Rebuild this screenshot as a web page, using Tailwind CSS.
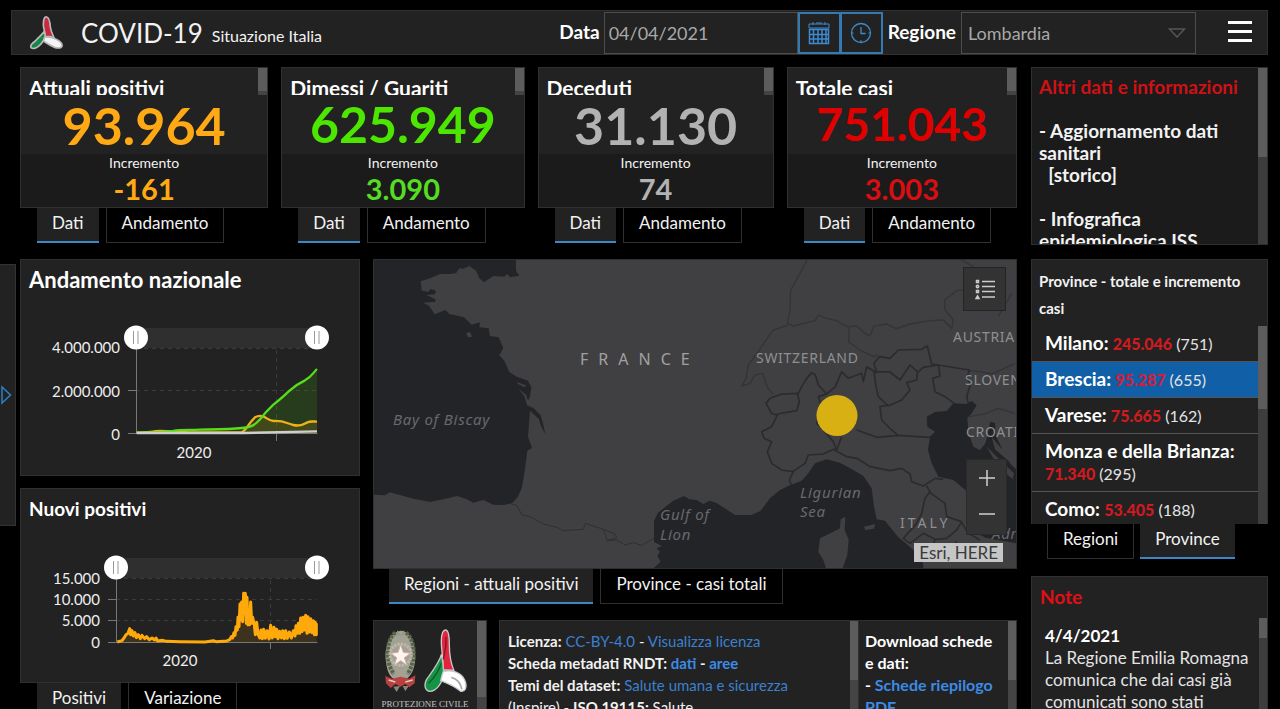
<!DOCTYPE html>
<html lang="it">
<head>
    <meta charset="UTF-8">
    <meta name="viewport" content="width=device-width, initial-scale=1.0">
    <title>COVID-19 Situazione Italia</title>
    <script src="https://cdn.jsdelivr.net/npm/@tailwindcss/browser@4"></script>
</head>
<body class="h-screen overflow-hidden bg-black text-[#f2f2f2] font-['Lato','Open_Sans',sans-serif]">

    <!-- Header -->
    <header class="mt-[10px] ml-[11px] mr-3 h-[45px] flex items-center bg-[#222] border border-[#303030]">
        <svg class="ml-4 w-9 h-9 shrink-0" viewBox="0 0 108 108" aria-hidden="true">
            <g stroke="#b9b9b9" stroke-width="5" stroke-linejoin="round">
                <path d="M48 50C42 60 32 66 22 78C10 86 6 92 9 98C16 104 30 98 38 88C46 80 50 72 54 62Z" fill="#17864a"/>
                <path d="M50 66C66 64 92 72 101 86C106 98 96 101 82 98C68 92 58 86 46 78Z" fill="#f4f4f4"/>
                <path d="M46 30C46 10 50 5 56 6C64 8 66 20 67 36C69 50 74 58 78 68C68 64 60 64 52 64C52 50 46 42 46 30Z" fill="#c9283e"/>
            </g>
        </svg>
        <h1 class="ml-[17px] text-[26px] leading-8">COVID-19</h1>
        <p class="ml-[9px] mt-[6px] text-base leading-6">Situazione Italia</p>

        <div class="ml-auto flex items-center">
            <label for="data" class="mr-1 text-[19px] font-bold text-white">Data</label>
            <input id="data" type="text" value="04/04/2021" class="w-[194px] h-[42px] px-1 text-lg text-[#a8a8a8] bg-[#222] border border-[#4c4c4c]">
            <button type="button" aria-label="Calendario" class="w-[43px] h-[42px] flex items-center justify-center border-2 border-[#3579b3]">
                <svg class="w-6 h-6" viewBox="0 0 24 24" fill="none" stroke="#3c8bd0">
                    <path d="M2 7V3H22V7H2M6 1V4M18 1V4M9 2H15"/>
                    <path d="M2 8.5H22M2 13.5H22M2 18H22M2 22.5H22M2.500 8V23M6.500 8V23M11 8V23M15 8V23M19 8V23M21.500 8V23" stroke-width="1.500"/>
                </svg>
            </button>
            <button type="button" aria-label="Ora" class="-ml-px w-[43px] h-[42px] flex items-center justify-center border-2 border-[#3579b3]">
                <svg class="w-6 h-6" viewBox="0 0 24 24" fill="none" stroke="#3c8bd0" stroke-width="1.300">
                    <circle cx="12" cy="12" r="9.500"/>
                    <path d="M12 6V12.500H16.500"/>
                    <path d="M12 19V21.500M3 12H4.500M19.500 12H21" stroke-width="1"/>
                </svg>
            </button>
            <label for="regione" class="ml-[5px] mr-[5px] text-[19px] font-bold text-white">Regione</label>
            <div class="relative">
                <select id="regione" class="appearance-none w-[235px] h-[42px] px-[6px] text-lg text-[#a8a8a8] bg-[#222] border border-[#4c4c4c]">
                    <option>Lombardia</option>
                </select>
                <svg class="absolute right-[10px] top-[16px] w-[18px] h-[10px] pointer-events-none" viewBox="0 0 18 10" fill="none" stroke="#555" stroke-width="1.500"><path d="M1.500 1H16.500L9 9Z"/></svg>
            </div>
            <button type="button" aria-label="Menu" class="ml-8 mr-[15px] pb-[3px] flex flex-col gap-[6px]">
                <span class="w-6 h-[3px] bg-white"></span>
                <span class="w-6 h-[3px] bg-white"></span>
                <span class="w-6 h-[3px] bg-white"></span>
            </button>
        </div>
    </header>

    <div class="flex items-start mt-3">
        <!-- Left drawer handle -->
        <aside class="w-4 h-[262px] mt-[197px] shrink-0 flex items-center bg-[#222] border-y border-r border-[#333]">
            <button type="button" aria-label="Apri pannello">
                <svg class="w-3 h-5" viewBox="0 0 12 20" fill="none" stroke="#2f7fc4" stroke-width="1.500"><path d="M2 2V18L10.500 10Z"/></svg>
            </button>
        </aside>

        <main class="flex-1 min-w-0 ml-1 mr-3 grid grid-cols-[minmax(0,1fr)_237px] gap-[14px] items-start">
            <div>
                <!-- Indicators -->
                <div class="grid grid-cols-[248fr_243fr_236fr_230fr] gap-x-[13px]">
                    <section>
                        <div class="h-[141px] bg-[#222] border border-[#303030]">
                            <div class="flex h-[27px] overflow-hidden">
                                <h2 class="flex-1 pl-2 pt-2 text-[21px] leading-6 font-bold text-white">Attuali positivi</h2>
                                <div class="w-[9px] h-[27px] bg-[#5c5c5c] border-b-4 border-[#444]"></div>
                            </div>
                            <p class="h-[59px] text-center text-[52px] leading-[60px] font-bold text-[#ffaa15]">93.964</p>
                            <div class="h-[53px] bg-[#1b1b1b] text-center">
                                <p class="text-sm leading-[18px]">Incremento</p>
                                <p class="text-[29px] leading-[34px] font-bold text-[#ffaa15]">-161</p>
                            </div>
                        </div>
                        <div class="ml-[17px] flex gap-[7px]">
                            <button type="button" class="h-[35px] px-[15px] pb-1 text-[17px] bg-[#222] border-b-2 border-[#3d87c9]">Dati</button>
                            <button type="button" class="h-[35px] px-[15px] pb-1 text-[17px] border border-t-0 border-[#303030]">Andamento</button>
                        </div>
                    </section>

                    <section>
                        <div class="h-[141px] bg-[#222] border border-[#303030]">
                            <div class="flex h-[27px] overflow-hidden">
                                <h2 class="flex-1 pl-2 pt-2 text-[21px] leading-6 font-bold text-white">Dimessi / Guariti</h2>
                                <div class="w-[9px] h-[27px] bg-[#5c5c5c] border-b-4 border-[#444]"></div>
                            </div>
                            <p class="h-[59px] text-center text-[50px] leading-[58px] font-bold text-[#4ce600]">625.949</p>
                            <div class="h-[53px] bg-[#1b1b1b] text-center">
                                <p class="text-sm leading-[18px]">Incremento</p>
                                <p class="text-[29px] leading-[34px] font-bold text-[#55dd22]">3.090</p>
                            </div>
                        </div>
                        <div class="ml-[17px] flex gap-[7px]">
                            <button type="button" class="h-[35px] px-[15px] pb-1 text-[17px] bg-[#222] border-b-2 border-[#3d87c9]">Dati</button>
                            <button type="button" class="h-[35px] px-[15px] pb-1 text-[17px] border border-t-0 border-[#303030]">Andamento</button>
                        </div>
                    </section>

                    <section>
                        <div class="h-[141px] bg-[#222] border border-[#303030]">
                            <div class="flex h-[27px] overflow-hidden">
                                <h2 class="flex-1 pl-2 pt-2 text-[21px] leading-6 font-bold text-white">Deceduti</h2>
                                <div class="w-[9px] h-[27px] bg-[#5c5c5c] border-b-4 border-[#444]"></div>
                            </div>
                            <p class="h-[59px] text-center text-[52px] leading-[60px] font-bold text-[#b2b2b2]">31.130</p>
                            <div class="h-[53px] bg-[#1b1b1b] text-center">
                                <p class="text-sm leading-[18px]">Incremento</p>
                                <p class="text-[29px] leading-[34px] font-bold text-[#b2b2b2]">74</p>
                            </div>
                        </div>
                        <div class="ml-[17px] flex gap-[7px]">
                            <button type="button" class="h-[35px] px-[15px] pb-1 text-[17px] bg-[#222] border-b-2 border-[#3d87c9]">Dati</button>
                            <button type="button" class="h-[35px] px-[15px] pb-1 text-[17px] border border-t-0 border-[#303030]">Andamento</button>
                        </div>
                    </section>

                    <section>
                        <div class="h-[141px] bg-[#222] border border-[#303030]">
                            <div class="flex h-[27px] overflow-hidden">
                                <h2 class="flex-1 pl-2 pt-2 text-[21px] leading-6 font-bold text-white">Totale casi</h2>
                                <div class="w-[9px] h-[27px] bg-[#5c5c5c] border-b-4 border-[#444]"></div>
                            </div>
                            <p class="h-[59px] text-center text-[46px] leading-[58px] font-bold text-[#e00000]">751.043</p>
                            <div class="h-[53px] bg-[#1b1b1b] text-center">
                                <p class="text-sm leading-[18px]">Incremento</p>
                                <p class="text-[29px] leading-[34px] font-bold text-[#d80e12]">3.003</p>
                            </div>
                        </div>
                        <div class="ml-[17px] flex gap-[7px]">
                            <button type="button" class="h-[35px] px-[15px] pb-1 text-[17px] bg-[#222] border-b-2 border-[#3d87c9]">Dati</button>
                            <button type="button" class="h-[35px] px-[15px] pb-1 text-[17px] border border-t-0 border-[#303030]">Andamento</button>
                        </div>
                    </section>
                </div>

                <div class="mt-4 grid grid-cols-[340fr_644fr] gap-x-[13px] items-start">
                    <!-- Charts -->
                    <div>
                        <section class="bg-[#222] border border-[#303030]">
                            <h2 class="h-[50px] pl-2 pt-2 text-[22px] leading-6 font-bold text-white">Andamento nazionale</h2>
                            <svg class="w-full block" viewBox="21 310 338 165" role="img" aria-label="Andamento nazionale">
                                <rect x="136" y="328" width="181" height="20" fill="#2f2f2f"/>
                                <g stroke="#3a3a3a" stroke-dasharray="4 4">
                                    <path d="M136 348.500H317M136 390.500H317M276.500 350V434"/>
                                </g>
                                <path d="M136.500 337V433.500M128 433.500H317.500M128 390.500H136M276.500 433V441" fill="none" stroke="#777"/>
                                <g transform="translate(0 250) scale(.33333)" fill="none" stroke-width="7" stroke-linejoin="round">
                                    <path d="M410 548L510 545L570 541L730 535L755 530L770 520L790 495L815 470L840 448L870 420L895 402L925 384L951 357V550H410Z" fill="#4ce600" fill-opacity=".13"/>
                                    <path d="M410 548L480 543L560 547L725 546L745 528L765 502L785 498L815 513L840 514L870 522L895 527L935 514L951 515V550H410Z" fill="#ffaa00" fill-opacity=".12"/>
                                    <path d="M410 548C440 548 450 545 480 543C510 543 540 547 570 547H725C740 540 745 520 765 502C775 496 785 496 795 502C805 508 812 514 822 513C850 511 860 520 880 525C895 529 905 527 920 518C932 512 940 515 951 515" stroke="#eeb11c"/>
                                    <path d="M410 548C450 548 500 546 520 543C545 538 570 541 600 539C650 538 690 538 725 534C760 532 768 520 780 508C795 488 805 478 818 466C835 452 850 440 866 424C885 406 900 398 915 391C935 380 940 368 951 357" stroke="#57dd1c"/>
                                    <path d="M410 549H730C800 548 870 546 951 544" stroke="#cfcfcf"/>
                                </g>
                                <g fill="#fff"><circle cx="136" cy="337.500" r="12"/><circle cx="317" cy="337.500" r="12"/></g>
                                <path d="M133.500 331V344M138 331V344M314.500 331V344M319 331V344" stroke="#999"/>
                                <g class="text-[15px]" fill="#eee" text-anchor="end">
                                    <text x="120" y="353">4.000.000</text>
                                    <text x="120" y="397">2.000.000</text>
                                    <text x="120" y="440">0</text>
                                    <text x="194" y="458" text-anchor="middle">2020</text>
                                </g>
                            </svg>
                        </section>

                        <section class="mt-3 bg-[#222] border border-[#303030]">
                            <h2 class="h-[51px] pl-2 pt-2 text-[19px] leading-6 font-bold text-white">Nuovi positivi</h2>
                            <svg class="w-full block" viewBox="21 540 338 142" role="img" aria-label="Nuovi positivi">
                                <rect x="116" y="558" width="201" height="20" fill="#2f2f2f"/>
                                <g stroke="#3a3a3a" stroke-dasharray="4 4">
                                    <path d="M116 578.500H317M116 599.500H317M116 620.500H317M270.500 580V642"/>
                                </g>
                                <path d="M116.500 567V642.500M108 642.500H317.500M108 599.500H116M108 620.500H116M270.500 642V649" fill="none" stroke="#777"/>
                                <g transform="translate(0 480) scale(.33333)" stroke="#ffaa0a" stroke-width="9" stroke-linejoin="round">
                                    <path d="M352 486L372 474L389 452L430 470L470 482L540 485L680 483L700 470L714 440L731 400L744 420L758 440L780 470L870 470L900 450L950 460V487H352Z" fill="#ffaa00" fill-opacity=".12" stroke="none"/>
                                    <path d="M352 486L366 482L372 474L378 464L384 460L389 446L392 464L396 452L400 468L405 458L409 473L415 464L421 476L426 466L434 476L440 470L448 479L456 474L464 480L468 474L473 483L488 481L500 484L540 485L615 486L640 482L648 485L680 483L690 478L694 470L698 474L702 458L705 466L708 440L712 450L714 412L717 440L720 372L723 420L725 366L728 425L731 340L734 400L736 340L739 430L741 352L744 435L747 392L749 434L752 366L755 430L758 412L763 435L766 464L770 427L774 462L779 474L783 450L787 476L791 448L796 475L801 452L807 477L812 436L817 474L822 442L826 470L830 448L834 476L839 454L844 474L848 452L853 476L857 452L862 475L868 456L874 474L880 452L885 468L888 437L892 460L895 430L899 460L902 414L906 455L909 412L913 450L917 406L921 460L924 410L928 456L932 416L936 458L940 422L943 464L946 427L949 464V430" fill="none"/>
                                </g>
                                <g fill="#fff"><circle cx="116" cy="567.500" r="12"/><circle cx="317" cy="567.500" r="12"/></g>
                                <path d="M113.500 561V574M118 561V574M314.500 561V574M319 561V574" stroke="#999"/>
                                <g class="text-[15px]" fill="#eee" text-anchor="end">
                                    <text x="100" y="584">15.000</text>
                                    <text x="100" y="605">10.000</text>
                                    <text x="100" y="626">5.000</text>
                                    <text x="100" y="648">0</text>
                                    <text x="180" y="666" text-anchor="middle">2020</text>
                                </g>
                            </svg>
                        </section>
                        <div class="ml-[17px] flex gap-[7px]">
                            <button type="button" class="h-[35px] px-[15px] pb-1 text-[17px] bg-[#222] border-b-2 border-[#3d87c9]">Positivi</button>
                            <button type="button" class="h-[35px] px-[15px] pb-1 text-[17px] border border-t-0 border-[#303030]">Variazione</button>
                        </div>
                    </div>

                    <div>
                        <!-- Map -->
                        <section class="relative border border-[#303030]">
                            <svg class="w-full block" viewBox="374 260 642 308" role="img" aria-label="Mappa">
                                <rect x="374" y="260" width="642" height="308" fill="#404042"/>
                                <!-- west coast, Pyrenees -->
                                <g transform="translate(370 250) scale(.33333)" fill="#232427">
                                    <path d="M10 28H438V62L448 77L420 82L412 72L402 80L370 78L342 97L328 85L318 62L298 48L280 56L268 55L258 70L238 72L210 72L180 85L152 94L155 122L175 125L182 117L198 122L195 133L170 135L196 148V155L160 158L178 168L194 193L226 180L238 192L282 202L305 224L330 217L328 232L356 235L360 258L386 262L400 294L388 316L404 334L418 366L440 380L474 392L484 412L480 440L474 452L468 434L446 416L464 440L471 466L490 474L512 496L520 524L526 552L514 530L506 506L480 482L474 560L486 594L472 602L466 650L456 712L444 740L426 760L400 765L370 764L340 750L310 758L290 748L262 738L220 748L180 756L130 746L60 727L44 736L10 734Z"/>
                                    <path d="M288 250L300 246L306 260L294 262Z" fill="#404042"/>
                                    <path d="M440 396L468 406L464 412L444 402Z" fill="#404042"/>
                                    <path d="M418 760L440 766L456 795L480 800L520 822L560 832L580 842L640 838L646 820L700 838L735 852L740 864L710 872L740 870L765 885L790 878L815 886L850 866L862 878M700 838L712 872" fill="none" stroke="#2f2f33" stroke-width="3"/>
                                </g>
                                <!-- Italy, seas and region borders -->
                                <g transform="translate(690 250) scale(.33333)">
                                    <g fill="#232427">
                                        <path d="M-110 955L-88 935L-98 918L-90 905L-100 895L-84 888L-108 876V812L-96 788L-50 752L-18 738L-2 748L20 750L40 762L58 752L78 758L100 772L135 795H185L212 782L240 745L270 720L300 706L335 692L355 670L375 640L410 628L450 638L490 660L520 678L545 715L552 770L560 808L585 812L625 862L650 882L690 918L705 955Z"/>
                                        <path d="M829 722L790 690L745 680L725 640L714 600L720 560L735 545L712 530L710 500L735 486L770 483L790 460L830 462L845 452L860 466L845 490L832 505L835 545L850 590L870 600L885 582L892 560L900 516L915 518L918 560L960 640L980 660V880L870 860L830 800Z"/>
                                    </g>
                                    <g fill="#404042">
                                        <path d="M452 808L466 800L464 840L476 870L472 915L458 955H408L400 930L385 905L390 865L430 845L450 835Z"/>
                                        <path d="M522 830L555 822L552 836L526 840Z"/>
                                        <path d="M905 560L925 585L975 635L970 645L915 598ZM890 590L940 640L972 670L968 688L925 650Z"/>
                                        <path d="M878 858L900 876L980 915V955H700V870L790 830Z"/>
                                    </g>
                                    <g fill="none" stroke="#343437" stroke-width="4">
                                        <path d="M352 28L330 70L302 120L300 180L292 220L310 228L375 212L385 195L410 205L440 212L470 230L500 228L525 250L540 258L552 228L590 222L620 236L660 222L720 212L760 210L785 235L790 210L765 180L764 150L800 122L835 118"/>
                                        <path d="M292 226L250 240L235 260L205 305L175 345L168 385L155 408L180 400L195 375L218 370L232 412L250 432"/>
                                        <path d="M478 232L476 275L510 300L550 320L565 315"/>
                                        <path d="M838 362L870 365L905 372L975 340M838 500L890 490L925 475L975 490M812 28L850 50M925 200L965 130"/>
                                    </g>
                                    <g fill="none" stroke="#2b2b2e" stroke-width="5" stroke-linejoin="round">
                                        <path d="M410 432L385 405L376 375L365 368L350 385L335 410L325 430L275 432L240 445L228 460L245 490L262 495L245 530L215 545L222 565L245 575L232 605L245 640L275 660L310 665L298 690L305 706"/>
                                        <path d="M262 492L320 482L328 455L322 430M410 432L436 410L455 365L475 385L515 370L520 395L530 350L560 368L552 340L568 320L600 325L625 300L695 298L712 288L725 342L838 360L830 385L842 400L830 440L835 460"/>
                                        <path d="M552 365L558 410L565 440L595 468L635 450L660 420L650 398L680 390L682 368L700 352L745 345L750 378L728 385L735 425L765 440L795 462"/>
                                        <path d="M560 365L600 366L630 390L660 345L682 365M595 465L570 470L575 510L605 540L625 556M410 432L385 440L395 470L380 520L400 540L430 575L440 600L455 560M500 540L560 562L625 556L720 562"/>
                                        <path d="M308 665L345 640L355 615L400 612L430 598L470 620L500 625L540 650L600 662L635 655L660 672L665 695L700 708L735 685L760 688"/>
                                        <path d="M710 708L720 725L705 745L695 790L680 820L640 865L660 880L700 850L735 868L770 865L800 840L815 815L770 800L765 760L720 728"/>
                                        <path d="M735 868L725 900L760 920L800 875M815 818L835 850L870 870"/>
                                    </g>
                                </g>
                                <g class="font-['Noto_Sans','Open_Sans',sans-serif] text-[14px]" fill="#8f8f91">
                                    <text x="580" y="365" class="text-[16px] tracking-[10px]" fill="#a0a0a2">FRANCE</text>
                                    <text x="756" y="363" class="tracking-wider">SWITZERLAND</text>
                                    <text x="953" y="342" class="tracking-wider">AUSTRIA</text>
                                    <text x="965" y="385" class="tracking-wider">SLOVENIA</text>
                                    <text x="966" y="437" class="tracking-wider">CROATIA</text>
                                    <text x="900" y="528" class="tracking-[3px]">ITALY</text>
                                    <g fill="#68696d" class="text-[15px] italic tracking-wider">
                                        <text x="393" y="425">Bay of Biscay</text>
                                        <text x="660" y="520">Gulf of</text>
                                        <text x="660" y="540">Lion</text>
                                        <text x="800" y="498">Ligurian</text>
                                        <text x="800" y="517">Sea</text>
                                        <text x="992" y="539">Adriatic</text>
                                    </g>
                                </g>
                                <circle cx="837" cy="415.500" r="20.500" fill="#d9b014"/>
                            </svg>
                            <button type="button" aria-label="Legenda" class="absolute top-[7px] right-[10px] w-[43px] h-11 flex items-center justify-center bg-[#333] border border-[#242424]">
                                <svg class="w-5 h-[22px]" viewBox="0 0 20 22" fill="none" stroke="#ccc">
                                    <path d="M7 3.500H20M7 8.500H20M7 13.500H20M7 19H20" stroke-width="1.300"/>
                                    <path d="M1.500 2.500H3.500V4.500H1.500ZM1.500 12.500H3.500V14.500H1.500ZM2.500 18L4 20.500H1Z" stroke-width="1.500"/><circle cx="2.500" cy="8.500" r="1.200" stroke-width="1.500"/>
                                </svg>
                            </button>
                            <div class="absolute bottom-[33px] right-[9px] w-[41px] h-[76px] pb-[2px] flex flex-col bg-[#333] border border-[#2a2a2a]">
                                <button type="button" aria-label="Ingrandisci" class="flex-1 flex items-center justify-center">
                                    <svg class="w-[18px] h-[18px]" viewBox="0 0 18 18" stroke="#d0d0d0" stroke-width="1.500"><path d="M9 1V17M1 9H17"/></svg>
                                </button>
                                <button type="button" aria-label="Riduci" class="flex-1 flex items-center justify-center">
                                    <svg class="w-[18px] h-[18px]" viewBox="0 0 18 18" stroke="#d0d0d0" stroke-width="1.500"><path d="M1 9H17"/></svg>
                                </button>
                            </div>
                            <p class="absolute bottom-[6px] right-[13px] px-[5px] text-[17px] leading-[19px] bg-[#c6c6c6] text-[#3a3a3a]">Esri, HERE</p>
                        </section>
                        <div class="ml-4 flex gap-[7px]">
                            <button type="button" class="h-[35px] px-[15px] pb-1 text-[17px] bg-[#222] border-b-2 border-[#3d87c9]">Regioni - attuali positivi</button>
                            <button type="button" class="h-[35px] px-[15px] pb-1 text-[17px] border border-t-0 border-[#303030]">Province - casi totali</button>
                        </div>

                        <!-- Credits and downloads -->
                        <div class="mt-4 flex h-[140px]">
                            <section class="w-[114px] mr-3 shrink-0 flex bg-[#222] border border-[#303030]">
                                <svg class="flex-1 min-w-0 h-[100px]" viewBox="374 621 103 100" role="img" aria-label="Protezione Civile">
                                    <g transform="translate(372 618) scale(.33333)">
                                        <path d="M86 38C52 42 36 90 42 130C46 168 56 184 84 190C112 186 128 160 130 120C130 80 118 40 86 38Z" fill="#a3a094"/>
                                        <path d="M70 44C50 60 42 96 50 130C52 146 60 160 66 168M102 44C122 60 130 96 122 130C118 150 112 160 106 168" fill="none" stroke="#56664b" stroke-width="12" stroke-dasharray="9 3"/>
                                        <path d="M76 36L86 56L94 36L98 50L72 52Z" fill="#8c9a80"/>
                                        <circle cx="86" cy="110" r="32" fill="none" stroke="#bdb8ad" stroke-width="9" stroke-dasharray="7 3"/>
                                        <path d="M86 80L94 103L116 106L97 119L105 142L86 128L67 142L74 119L56 106L78 103Z" fill="#fff4ee" stroke="#cbb0a4" stroke-width="3"/>
                                        <path d="M40 174L60 182L86 176L112 182L130 172L128 196L112 208L100 198L86 206L70 198L56 210L42 196Z" fill="#b8403f"/>
                                        <path d="M64 206L74 222L84 204M92 204L100 220L110 204" fill="#8c8577"/>
                                        <path d="M50 186L70 192M100 192L122 186" stroke="#e2c9c4" stroke-width="4"/>
                                        <g stroke="#c9c9c9" stroke-width="4" stroke-linejoin="round">
                                            <path d="M208 110C204 128 190 148 170 176C154 194 156 216 172 220C196 220 212 192 218 160Z" fill="#159447"/>
                                            <path d="M214 160C240 154 268 164 278 186C288 210 278 222 266 220C244 202 226 196 206 188C208 180 210 170 214 160Z" fill="#fff"/>
                                            <path d="M208 70C208 44 214 36 221 36C230 36 232 54 232 80C232 110 236 134 246 158C236 154 224 156 214 156C214 120 208 100 208 70Z" fill="#e3243d"/>
                                        </g>
                                        <path d="M222 56C224 90 218 104 214 124" fill="none" stroke="#7c1726" stroke-width="4"/>
                                        <path d="M170 196C186 180 200 160 208 136" fill="none" stroke="#0c5c2b" stroke-width="4"/>
                                        <path d="M238 178C254 182 266 196 270 214" fill="none" stroke="#a8a8a8" stroke-width="5"/>
                                    </g>
                                    <text x="425" y="707" text-anchor="middle" class="font-['Liberation_Serif',serif] text-[9px]" fill="#c4c4c4">PROTEZIONE CIVILE</text>
                                </svg>
                                <div class="w-[9px] bg-[#444]"><div class="h-[76px] bg-[#5c5c5c]"></div></div>
                            </section>
                            <section class="flex-1 min-w-0 flex overflow-hidden bg-[#222] border border-[#303030]">
                                <div class="flex-1 pl-2 pt-[9px] text-[15px] leading-[22px]">
                                    <p><b>Licenza:</b> <a href="#" class="text-[#3b80cf]">CC-BY-4.0</a> - <a href="#" class="text-[#3b80cf]">Visualizza licenza</a></p>
                                    <p class="font-bold">Scheda metadati RNDT: <a href="#" class="text-[#3b8be6]">dati</a> - <a href="#" class="text-[#3b8be6]">aree</a></p>
                                    <p><b>Temi del dataset:</b> <a href="#" class="text-[#3b80cf]">Salute umana e sicurezza</a></p>
                                    <p>(Inspire) - <b>ISO 19115:</b> Salute</p>
                                </div>
                                <div class="w-2 bg-[#444]"><div class="h-[59px] bg-[#5c5c5c]"></div></div>
                            </section>
                            <section class="w-[158px] shrink-0 flex overflow-hidden bg-[#222] border border-l-0 border-[#303030]">
                                <div class="flex-1 pl-[6px] pt-[9px] text-base leading-[22px] font-bold text-white">
                                    <p>Download schede<br>e dati:</p>
                                    <p>- <a href="#" class="text-[#3b8be6]">Schede riepilogo<br>PDF</a></p>
                                </div>
                                <div class="w-2 bg-[#444]"><div class="h-[59px] bg-[#5c5c5c]"></div></div>
                            </section>
                        </div>
                    </div>
                </div>
            </div>

            <!-- Right column -->
            <div>
                <section class="h-[178px] flex overflow-hidden bg-[#1b1b1b] border border-[#303030]">
                    <div class="flex-1 pl-[7px] pt-2 text-[19px] leading-[22px] font-bold">
                        <h2 class="text-[#cf1116]">Altri dati e informazioni</h2>
                        <p class="mt-[22px]">- Aggiornamento dati sanitari<br>&nbsp; [storico]</p>
                        <p class="mt-[22px]">- Infografica epidemiologica ISS</p>
                    </div>
                    <div class="w-[9px] shrink-0 bg-[#3d3d3d]"><div class="h-[89px] bg-[#5c5c5c]"></div></div>
                </section>

                <section class="mt-[14px] h-[265px] flex flex-col overflow-hidden bg-[#222] border border-b-0 border-[#303030]">
                    <h2 class="h-[66px] shrink-0 pl-[7px] pr-6 pt-2 text-[15px] leading-[27px] font-bold">Province - totale e incremento casi</h2>
                    <div class="flex-1 flex overflow-hidden">
                        <ul class="flex-1 text-base leading-[22px] text-[#e4e4e4]">
                            <li class="px-[13px] py-[6px] border-b border-[#555]"><b class="text-[19px] leading-[22px] text-white">Milano:</b> <b class="font-black text-[#cf1a1f]">245.046</b> (751)</li>
                            <li class="px-[13px] py-[6px] border-b border-[#555] bg-[#115fa6]"><b class="text-[19px] leading-[22px] text-white">Brescia:</b> <b class="font-black text-[#cf1f3f]">95.287</b> (655)</li>
                            <li class="px-[13px] py-[6px] border-b border-[#555]"><b class="text-[19px] leading-[22px] text-white">Varese:</b> <b class="font-black text-[#cf1a1f]">75.665</b> (162)</li>
                            <li class="px-[13px] py-[6px] border-b border-[#555]"><b class="text-[19px] leading-[22px] text-white">Monza e della Brianza:</b><br><b class="font-black text-[#cf1a1f]">71.340</b> (295)</li>
                            <li class="px-[13px] py-[6px]"><b class="text-[19px] leading-[22px] text-white">Como:</b> <b class="font-black text-[#cf1a1f]">53.405</b> (188)</li>
                        </ul>
                        <div class="w-[9px] shrink-0 bg-[#3d3d3d]"><div class="h-[83px] bg-[#5c5c5c]"></div></div>
                    </div>
                </section>
                <div class="ml-4 flex gap-[6px]">
                    <button type="button" class="h-[35px] px-[15px] pb-1 text-[17px] border border-t-0 border-[#303030]">Regioni</button>
                    <button type="button" class="h-[35px] px-[15px] pb-1 text-[17px] bg-[#222] border-b-2 border-[#3d87c9]">Province</button>
                </div>

                <section class="mt-[17px] h-[180px] flex flex-col bg-[#222] border border-[#303030]">
                    <h2 class="h-[41px] pl-2 pt-2 text-[19px] leading-6 font-bold text-[#e00f16]">Note</h2>
                    <div class="flex-1 flex overflow-hidden">
                        <div class="flex-1 pl-[13px] pt-[7px] text-[17px] leading-[22px] text-[#e4e4e4]">
                            <p class="font-bold text-white">4/4/2021</p>
                            <p>La Regione Emilia Romagna comunica che dai casi già comunicati sono stati</p>
                        </div>
                        <div class="w-2 shrink-0 bg-[#3d3d3d]"><div class="h-5 bg-[#5c5c5c]"></div></div>
                    </div>
                </section>
            </div>
        </main>
    </div>
</body>
</html>
